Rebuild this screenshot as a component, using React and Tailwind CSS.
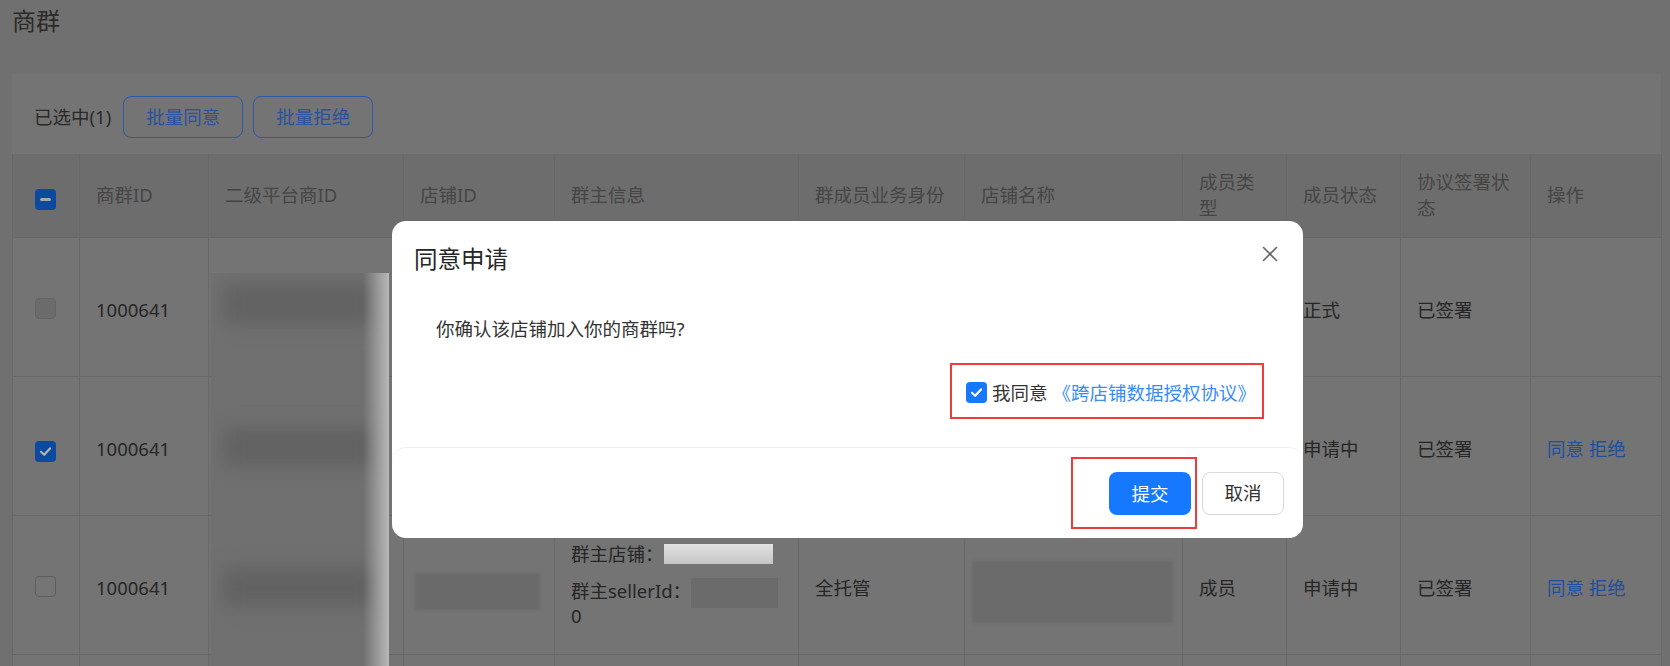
import { X } from "lucide-react";

// page under the modal mask is drawn in its dimmed colours
const cols = [67, 129, 195, 151, 244, 166, 218, 104, 114, 130, 131];

const headers = [
  "商群ID",
  "二级平台商ID",
  "店铺ID",
  "群主信息",
  "群成员业务身份",
  "店铺名称",
  "成员类型",
  "成员状态",
  "协议签署状态",
  "操作",
];

const rows = [
  { check: "disabled", id: "1000641", biz: "全托管", type: "群主", status: "正式", sign: "已签署", ops: false },
  { check: "checked", id: "1000641", biz: "全托管", type: "成员", status: "申请中", sign: "已签署", ops: true },
  { check: "empty", id: "1000641", biz: "全托管", type: "成员", status: "申请中", sign: "已签署", ops: true },
];

const CheckMark = ({ color }) => (
  <svg width="13" height="13" viewBox="0 0 13 13" fill="none">
    <polyline points="2,6.8 5.2,9.8 11,3.4" stroke={color} strokeWidth="2.2" strokeLinecap="round" strokeLinejoin="round" />
  </svg>
);

const TableCheck = ({ state }) => {
  if (state === "checked" || state === "indeterminate") {
    return (
      <span className="inline-flex h-[21px] w-[21px] items-center justify-center rounded-[4px] bg-[#0b4a9e]">
        {state === "checked" ? (
          <CheckMark color="#b4b4b4" />
        ) : (
          <span className="h-[3px] w-[11px] rounded-full bg-[#a9a9a9]" />
        )}
      </span>
    );
  }
  if (state === "disabled") {
    return <span className="inline-block h-[21px] w-[21px] rounded-[4px] border border-[#646464] bg-[#6b6b6b]" />;
  }
  return <span className="inline-block h-[21px] w-[21px] rounded-[4px] border border-[#5e5e5e] bg-[#757575]" />;
};

const cell = "border border-[#686868] px-[16px] pt-[6px] align-middle";

const App = () => {
  return (
    <div className="relative h-[666px] w-full overflow-hidden bg-[#707070] font-['Noto_Sans','Noto_Sans_CJK_SC',sans-serif] text-[18.5px] text-[#262626]">
      <div className="pl-[12px] pr-[9px] pt-[5px]">
        <h1 className="text-[24px] leading-[32px] text-[#2b2b2b]">商群</h1>

        <div className="mt-[37px] bg-[#747474]">
          {/* Toolbar */}
          <div className="flex items-center pl-[22px] pt-[22px] pb-[16px]">
            <span className="leading-[26px] text-[#2a2a2a]">已选中(1)</span>
            <button className="ml-[12px] h-[42px] w-[120px] rounded-[8px] border border-[#2a5aa8] text-[#2b519e]">
              批量同意
            </button>
            <button className="ml-[10px] h-[42px] w-[120px] rounded-[8px] border border-[#2a5aa8] text-[#2b519e]">
              批量拒绝
            </button>
          </div>

          {/* Table */}
          <table className="w-[1649px] table-fixed border-collapse text-left">
            <colgroup>
              {cols.map((w, i) => (
                <col key={i} style={{ width: w }} />
              ))}
            </colgroup>
            <thead>
              <tr className="h-[83px] bg-[#6d6d6d]">
                <th className="border-x border-b border-[#686868] text-center align-middle">
                  <span className="inline-flex translate-x-[-1px]">
                    <TableCheck state="indeterminate" />
                  </span>
                </th>
                {headers.map((h) => (
                  <th
                    key={h}
                    className="border-x border-b border-[#686868] px-[16px] align-middle font-normal leading-[26px] text-[#454545]"
                  >
                    {h}
                  </th>
                ))}
              </tr>
            </thead>
            <tbody>
              {rows.map((r, i) => (
                <tr key={i} className="bg-[#747474]">
                  <td className="h-[139px] border border-[#686868] pt-[10px] text-center align-middle">
                    <span className="inline-flex translate-x-[-1px]">
                      <TableCheck state={r.check} />
                    </span>
                  </td>
                  <td className={cell}>{r.id}</td>
                  <td className={`${cell} relative`}>
                    {i === 0 && (
                      <div className="absolute left-[2px] top-[35px] flex h-[420px] w-[178px] flex-col overflow-hidden bg-[#707070]">
                        <div className="mx-[12px] mt-[11px] h-[40px] bg-[#626262] blur-[9px]" />
                        <div className="mx-[12px] mt-[103px] h-[40px] bg-[#626262] blur-[9px]" />
                        <div className="mx-[12px] mt-[100px] h-[40px] bg-[#626262] blur-[9px]" />
                        <div className="absolute right-0 top-0 h-full w-[26px] bg-linear-to-r from-transparent to-[#b8b8b8]" />
                      </div>
                    )}
                  </td>
                  <td className="border border-[#686868] px-[11px] pt-[14px] align-middle">
                    <div className="h-[37px] w-[125px] bg-[#6a6a6a] blur-[1.5px]" />
                  </td>
                  <td className="border border-[#686868] px-[16px] align-middle">
                    <div className="leading-[23px]">
                      <div>
                        群主店铺：
                        <span className="inline-block h-[20px] w-[109px] bg-linear-to-b from-[#e2e2e2] to-[#c6c6c6] align-[-3px]" />
                      </div>
                      <div className="mt-[14px]">
                        群主sellerId：
                        <span className="-my-[4px] inline-block h-[30px] w-[87px] bg-[#6b6b6b] align-middle" />
                        <br />0
                      </div>
                    </div>
                  </td>
                  <td className={cell}>{r.biz}</td>
                  <td className="border border-[#686868] px-[7px] pt-[14px] align-middle">
                    <div className="h-[62px] w-[201px] bg-[#6b6b6b] blur-[1.5px]" />
                  </td>
                  <td className={cell}>{r.type}</td>
                  <td className={cell}>{r.status}</td>
                  <td className={cell}>{r.sign}</td>
                  <td className={`${cell} text-[#1f4f9f]`}>{r.ops ? "同意 拒绝" : ""}</td>
                </tr>
              ))}
              {/* next row, only its top edge is on screen */}
              <tr className="bg-[#747474]">
                {cols.map((w, i) => (
                  <td key={i} className="h-[139px] border border-[#686868]" />
                ))}
              </tr>
            </tbody>
          </table>
        </div>
      </div>

      {/* Modal */}
      <div className="absolute left-[392px] top-[221px] flex h-[317px] w-[911px] flex-col rounded-[14px] bg-white">
        <div className="flex items-start justify-between pl-[22px] pr-[23px] pt-[22px]">
          <h2 className="text-[23.5px] leading-[32px] text-[#262626]">同意申请</h2>
          <button className="mt-[1px] text-[#666]">
            <X size={20} strokeWidth={1.5} className="h-[20px] w-[20px] scale-[1.3]" />
          </button>
        </div>

        <p className="mt-[41px] pl-[44px] leading-[26px] text-[#333]">你确认该店铺加入你的商群吗?</p>

        <div className="mt-[21px] flex justify-end pr-[39px]">
          <div className="flex h-[56px] w-[314px] items-center border-2 border-[#ee3b3b] pl-[14px] pt-[3px]">
            <span className="inline-flex h-[21px] w-[21px] items-center justify-center rounded-[4px] bg-[#1677ff]">
              <CheckMark color="#ffffff" />
            </span>
            <span className="ml-[5px] leading-[26px] text-[#333]">我同意</span>
            <a className="ml-[5px] leading-[26px] text-[#3b8cf5]">《跨店铺数据授权协议》</a>
          </div>
        </div>

        <div className="mt-[28px] flex flex-1 items-center justify-end gap-[5px] rounded-t-[14px] border-t border-[#f0f0f0] pr-[19px]">
          <div className="border-2 border-[#ee3b3b] pb-[12px] pl-[36px] pr-[4px] pt-[13px]">
            <button className="h-[43px] w-[82px] rounded-[8px] bg-[#1677ff] text-white">提交</button>
          </div>
          <button className="h-[43px] w-[82px] rounded-[8px] border border-[#d9d9d9] text-[#333]">取消</button>
        </div>
      </div>
    </div>
  );
};

export default App;
